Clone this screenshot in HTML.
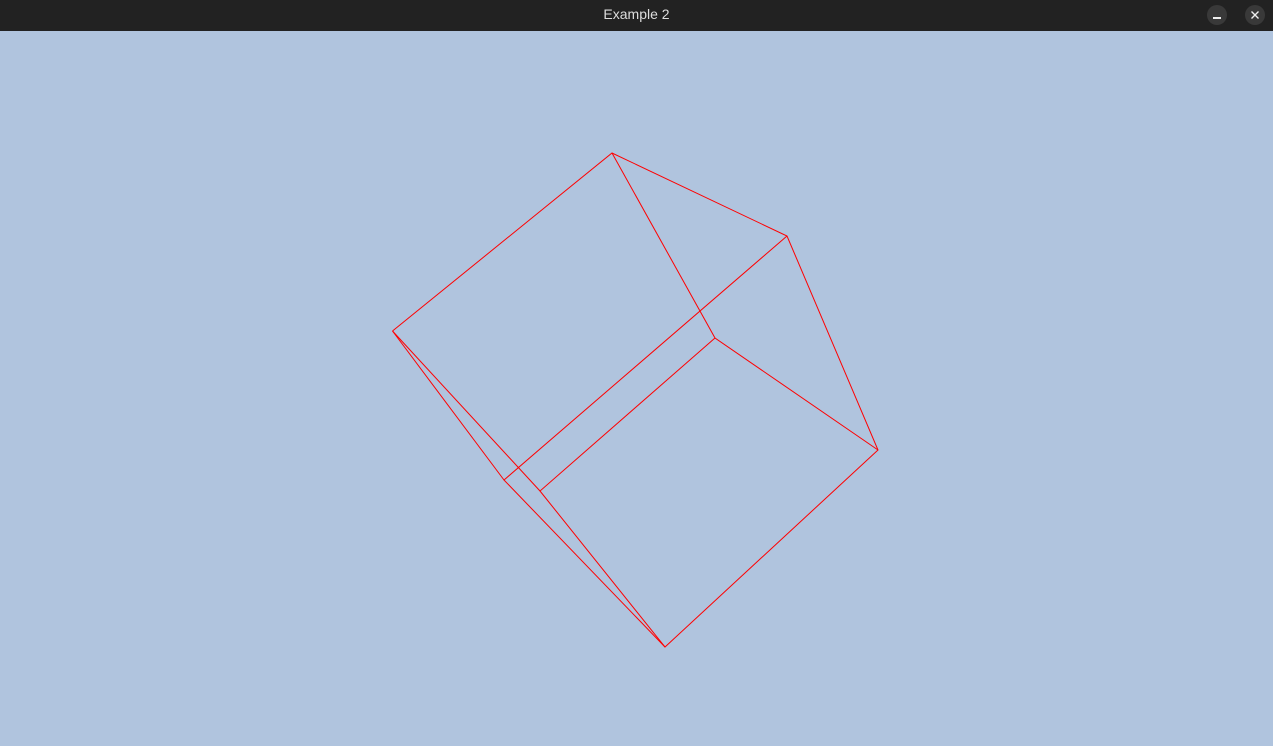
<!DOCTYPE html>
<html><head><style>
body{margin:0;width:1273px;height:746px;overflow:hidden;background:#b0c4de;font-family:"Liberation Sans",sans-serif}
.t{position:absolute;top:0;left:0;width:1273px;height:31px;background:#222;color:#ddd;font-size:14px;line-height:29px;text-align:center}
.b{position:absolute;top:5px;width:20px;height:20px;border-radius:50%;background:#393939}
</style></head><body>
<div class="t">Example 2</div>
<div class="b" style="left:1207px"><div style="position:absolute;left:6px;top:12px;width:8px;height:1.5px;background:#eee"></div></div>
<div class="b" style="left:1245px"><svg width="20" height="20"><path d="M6.5 6.5L13.5 13.5M13.5 6.5L6.5 13.5" stroke="#eee" stroke-width="1.4"/></svg></div>
<svg style="position:absolute;left:0;top:0" width="1273" height="746"><g stroke="red" stroke-width="1" fill="none">
<path d="M392.5 331L612 153L787 236L878 450L665 647L504 480L787 236"/>
<path d="M392.5 331L504 480"/>
<path d="M612 153L715 338L878 450M715 338L540 491L665 647"/>
<path d="M392.5 331L540 491"/>
</g></svg>
</body></html>
